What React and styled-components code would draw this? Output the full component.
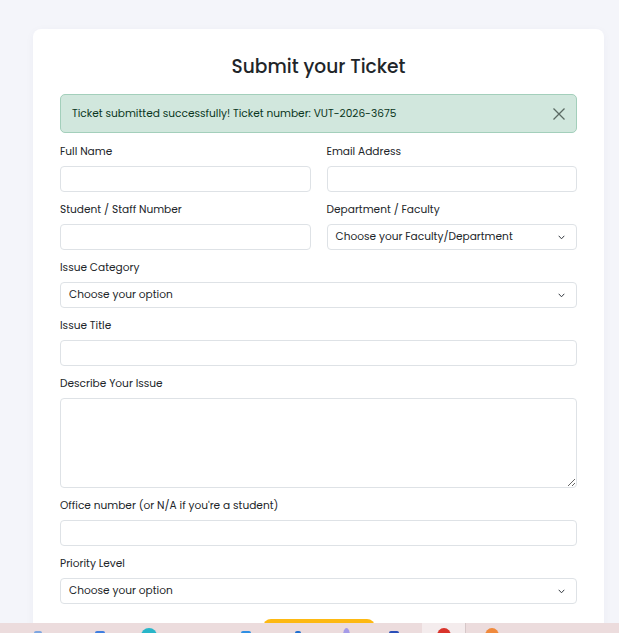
import styled, { createGlobalStyle } from 'styled-components'

const GlobalStyle = createGlobalStyle`
  html, body {
    margin: 0;
    padding: 0;
    background: #f4f5fa;
    font-family: "Poppins", Inter, "Noto Sans", sans-serif;
    color: #212529;
  }
  * { box-sizing: border-box; }
`

const taskItems = [
  { w: 76, size: 8, c: '#7ea6e0' },
  { w: 48, size: 10, c: '#3f7ee0' },
  { w: 50, size: 16, c: '#28b6c9', round: true },
  { w: 48 },
  { w: 48, size: 10, c: '#2f8fe3' },
  { w: 56, size: 6, c: '#1f6fd0' },
  { w: 40, size: 7, c: '#a59be8', round: true },
  { w: 56, size: 10, c: '#2a4fb8' },
  { w: 44, size: 14, c: '#d9332b', round: true, active: true },
  { w: 52, size: 14, c: '#f08a3c', round: true },
]

export default function App() {
  return (
    <>
      <GlobalStyle />
      <Page>
        <Card>
          <Title>Submit your Ticket</Title>
          <Alert>
            <span>Ticket submitted successfully! Ticket number: VUT-2026-3675</span>
            <Close aria-label="close">
              <svg width="12" height="12" viewBox="0 0 12 12">
                <path d="M0.5 0.5L11.5 11.5M11.5 0.5L0.5 11.5" stroke="#5b6a63" strokeWidth="1.3" fill="none" />
              </svg>
            </Close>
          </Alert>

          <Row>
            <Group>
              <Label>Full Name</Label>
              <Input />
            </Group>
            <Group>
              <Label>Email Address</Label>
              <Input />
            </Group>
          </Row>
          <Row>
            <Group>
              <Label>Student / Staff Number</Label>
              <Input />
            </Group>
            <Group>
              <Label>Department / Faculty</Label>
              <Select>Choose your Faculty/Department</Select>
            </Group>
          </Row>
          <Group>
            <Label>Issue Category</Label>
            <Select>Choose your option</Select>
          </Group>
          <Group>
            <Label>Issue Title</Label>
            <Input />
          </Group>
          <Group>
            <Label>Describe Your Issue</Label>
            <TextArea />
          </Group>
          <Group>
            <Label>Office number (or N/A if you're a student)</Label>
            <Input />
          </Group>
          <Group>
            <Label>Priority Level</Label>
            <Select>Choose your option</Select>
          </Group>
          <Actions>
            <SubmitButton>Submit Ticket</SubmitButton>
          </Actions>
        </Card>
      </Page>
      <Taskbar>
        {taskItems.map((t, i) => (
          <TaskSlot key={i} $w={t.w} $active={t.active}>
            {t.c && <TaskIcon $size={t.size} $c={t.c} $round={t.round} />}
          </TaskSlot>
        ))}
      </Taskbar>
    </>
  )
}

function Select({ children }) {
  return (
    <SelectBox>
      <span>{children}</span>
      <svg width="7" height="5" viewBox="0 0 7 5">
        <path d="M0.7 0.8L3.5 3.8L6.3 0.8" stroke="#343a40" strokeWidth="1" fill="none" />
      </svg>
    </SelectBox>
  )
}

const Page = styled.div`
  padding: 29px 15px 40px 33px;
`

const Card = styled.div`
  background: #fff;
  border-radius: 8px;
  box-shadow: 0 2px 10px rgba(30, 40, 90, 0.04);
  padding: 26px 27px 30px;
`

const Title = styled.h2`
  margin: 0 0 15px;
  text-align: center;
  font-size: 18.6px;
  line-height: 24px;
  font-weight: 500;
  color: #212529;
`

const Alert = styled.div`
  display: flex;
  align-items: center;
  justify-content: space-between;
  height: 39px;
  padding: 0 11px;
  margin-bottom: 10px;
  background: #d1e7dd;
  border: 1px solid #a3cfbb;
  border-radius: 5px;
  color: #0a3622;
  font-size: 10.6px;
`

const Close = styled.button`
  display: flex;
  border: 0;
  background: none;
  padding: 0;
  cursor: pointer;
`

const Row = styled.div`
  display: grid;
  grid-template-columns: 1fr 1fr;
  gap: 16px;
`

const Group = styled.div`
  margin-bottom: 9px;
`

const Label = styled.div`
  font-size: 10.6px;
  line-height: 17px;
  margin-bottom: 6px;
  color: #212529;
`

const fieldBase = `
  display: block;
  width: 100%;
  border: 1px solid #dee2e6;
  border-radius: 4px;
  background: #fff;
  font-family: inherit;
  font-size: 10.6px;
  color: #212529;
`

const Input = styled.input`
  ${fieldBase}
  height: 26px;
  padding: 0 8px;
`

const TextArea = styled.textarea`
  ${fieldBase}
  height: 90px;
  padding: 6px 8px;
  resize: vertical;
`

const SelectBox = styled.div`
  ${fieldBase}
  display: flex;
  align-items: center;
  justify-content: space-between;
  height: 26px;
  padding: 0 11px 0 8px;
`

const Actions = styled.div`
  display: flex;
  justify-content: center;
  margin-top: 15px;
`

const SubmitButton = styled.button`
  width: 112px;
  height: 34px;
  border: 0;
  border-radius: 8px;
  background: #fdb913;
  color: #fff;
  font-family: inherit;
  font-size: 12px;
  font-weight: 500;
`

const Taskbar = styled.div`
  position: fixed;
  left: 0;
  right: 0;
  top: 623px;
  height: 40px;
  display: flex;
  background: #ecdcdd;
  overflow: hidden;
`

const TaskSlot = styled.div`
  flex: 0 0 ${p => p.$w}px;
  display: flex;
  justify-content: center;
  padding-top: 5px;
  background: ${p => (p.$active ? '#f4eced' : 'transparent')};
  border-right: ${p => (p.$active ? '1px solid #d6c7c8' : '0')};
`

const TaskIcon = styled.div`
  width: ${p => p.$size}px;
  height: 16px;
  margin-top: ${p => (p.$round ? 0 : 3)}px;
  border-radius: ${p => (p.$round ? '50%' : '2px')};
  background: ${p => p.$c};
`
